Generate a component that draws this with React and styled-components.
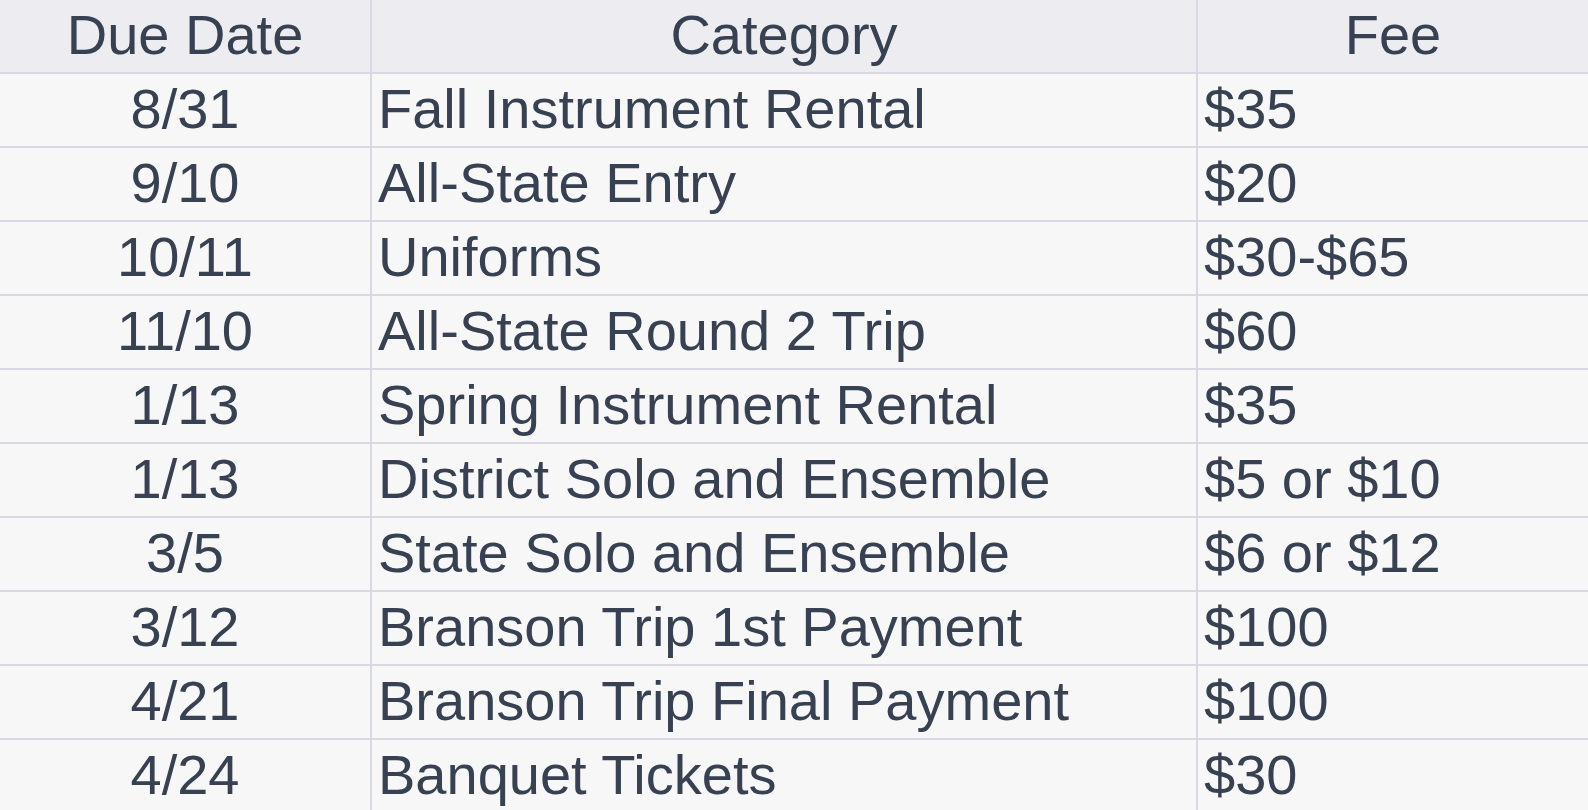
import React from "react";
import styled, { createGlobalStyle } from "styled-components";

const GlobalStyle = createGlobalStyle`
  html, body {
    margin: 0;
    padding: 0;
    overflow: hidden;
    background: #f7f7f8;
  }
`;

const Table = styled.table`
  width: 100%;
  table-layout: fixed;
  border-collapse: separate;
  border-spacing: 0;
  font-family: "Liberation Sans", Arial, sans-serif;
  font-size: 56px;
  color: #374151;
`;

const Col = styled.col`
  width: ${(p) => p.$w || "auto"};
`;

const Cell = styled.td`
  box-sizing: border-box;
  height: 74px;
  padding: 0 6px 2px;
  line-height: 70px;
  font-weight: 400;
  text-align: ${(p) => (p.$center ? "center" : "left")};
  white-space: nowrap;
  overflow: hidden;
  background: ${(p) => (p.$head ? "#ececf1" : "#f7f7f8")};
  border-bottom: 2px solid #d9d9e3;
  border-right: 2px solid #d9d9e3;

  &:last-child {
    border-right: none;
  }
`;

const HeadCell = styled(Cell).attrs({ as: "th", $head: true, $center: true })``;

const fees = [
  ["8/31", "Fall Instrument Rental", "$35"],
  ["9/10", "All-State Entry", "$20"],
  ["10/11", "Uniforms", "$30-$65"],
  ["11/10", "All-State Round 2 Trip", "$60"],
  ["1/13", "Spring Instrument Rental", "$35"],
  ["1/13", "District Solo and Ensemble", "$5 or $10"],
  ["3/5", "State Solo and Ensemble", "$6 or $12"],
  ["3/12", "Branson Trip 1st Payment", "$100"],
  ["4/21", "Branson Trip Final Payment", "$100"],
  ["4/24", "Banquet Tickets", "$30"],
];

const App = () => {
  return (
    <>
      <GlobalStyle />
      <Table>
        <colgroup>
          <Col $w="372px" />
          <Col $w="826px" />
          <Col />
        </colgroup>
        <thead>
          <tr>
            <HeadCell>Due Date</HeadCell>
            <HeadCell>Category</HeadCell>
            <HeadCell>Fee</HeadCell>
          </tr>
        </thead>
        <tbody>
          {fees.map(([date, category, fee], i) => (
            <tr key={i}>
              <Cell $center>{date}</Cell>
              <Cell>{category}</Cell>
              <Cell>{fee}</Cell>
            </tr>
          ))}
        </tbody>
      </Table>
    </>
  );
};

export default App;
